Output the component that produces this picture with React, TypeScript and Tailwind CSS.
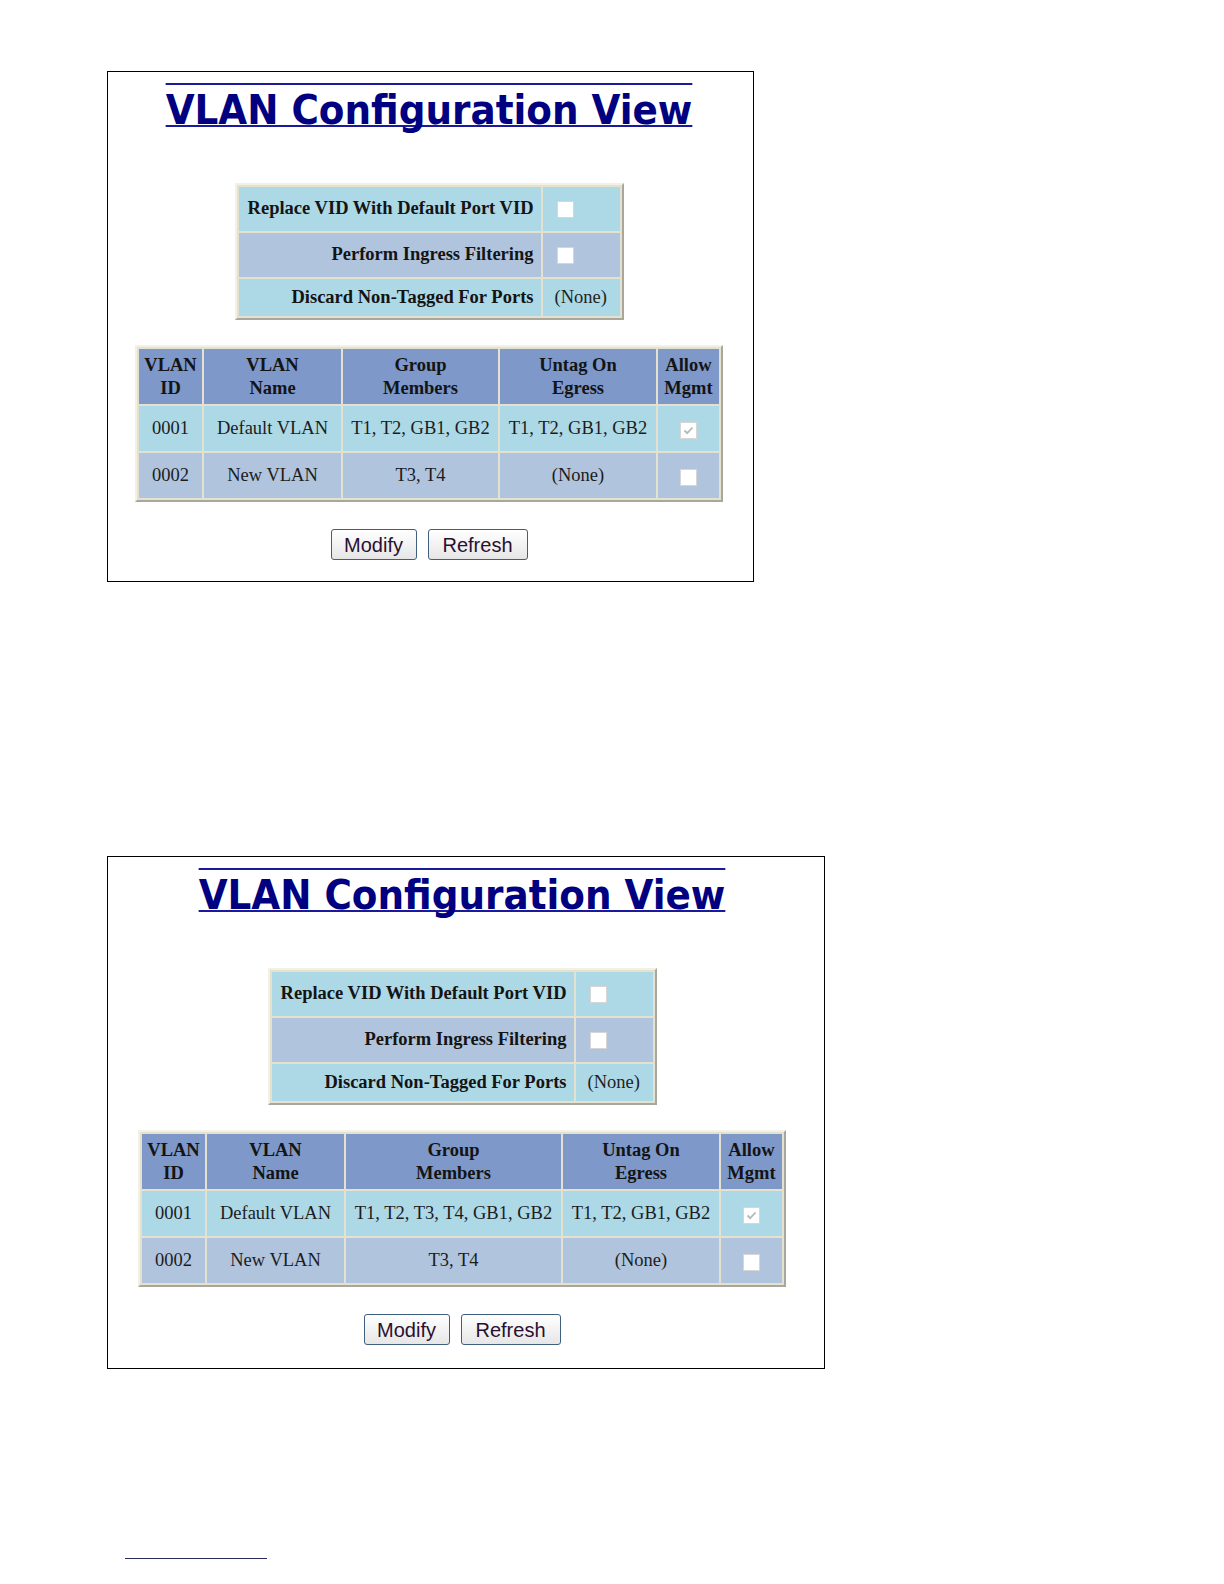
import React from "react";

const serif = "font-['Liberation_Serif','Times_New_Roman',serif]";

function Box({ checked }: { checked?: boolean }) {
  return (
    <div className="w-[17px] h-[17px] bg-white border border-[#d6d6d6] flex items-center justify-center">
      {checked ? (
        <svg width="13" height="13" viewBox="0 0 13 13">
          <path d="M2.5 6.5 L5.2 9.2 L10.5 3.5" fill="none" stroke="#b8b8b8" strokeWidth="1.8" />
        </svg>
      ) : null}
    </div>
  );
}

function Title() {
  return (
    <div className="flex justify-center">
      <span className="font-['DejaVu_Sans_Condensed','DejaVu_Sans',sans-serif] [font-stretch:condensed] font-bold text-[#000080] text-[41.5px] leading-[49px] [text-decoration-line:underline_overline] [text-decoration-skip-ink:none] decoration-[2px] decoration-[#1a1a9a]">
        VLAN Configuration View
      </span>
    </div>
  );
}

function Settings() {
  const label = `${serif} font-bold text-[18.5px] text-[#141414] flex items-center justify-end pr-[7px] whitespace-nowrap`;
  const val = `${serif} text-[18.5px] text-[#222] flex items-center pl-[12px]`;
  return (
    <div className="flex justify-center">
      <div className="border-2 border-t-[#f3f1e4] border-l-[#f3f1e4] border-r-[#a9a79c] border-b-[#a9a79c] bg-[#e4e1d0] p-[2px]">
        <div className="grid grid-cols-[302px_77px] grid-rows-[44px_44px_37px] gap-[2px]">
          <div className={`${label} bg-[#add8e6]`}>Replace VID With Default Port VID</div>
          <div className={`${val} bg-[#add8e6]`}>
            <div className="ml-[2px]"><Box /></div>
          </div>
          <div className={`${label} bg-[#b0c4de]`}>Perform Ingress Filtering</div>
          <div className={`${val} bg-[#b0c4de]`}>
            <div className="ml-[2px]"><Box /></div>
          </div>
          <div className={`${label} bg-[#add8e6]`}>Discard Non-Tagged For Ports</div>
          <div className={`${val} bg-[#add8e6]`}>(None)</div>
        </div>
      </div>
    </div>
  );
}

function VlanTable({ members, cols }: { members: string; cols: string }) {
  const head = `${serif} font-bold text-[18.5px] leading-[23px] text-[#141414] bg-[#7d98c9] flex items-center justify-center text-center`;
  const c1 = `${serif} text-[18.5px] text-[#1c1c1c] bg-[#add8e6] flex items-center justify-center whitespace-nowrap`;
  const c2 = `${serif} text-[18.5px] text-[#1c1c1c] bg-[#b0c4de] flex items-center justify-center whitespace-nowrap`;
  return (
    <div className="flex justify-center">
      <div className="border-2 border-t-[#f3f1e4] border-l-[#f3f1e4] border-r-[#a9a79c] border-b-[#a9a79c] bg-[#e4e1d0] p-[2px]">
        <div className={`grid ${cols} grid-rows-[55px_45px_45px] gap-[2px]`}>
          <div className={head}>VLAN<br />ID</div>
          <div className={head}>VLAN<br />Name</div>
          <div className={head}>Group<br />Members</div>
          <div className={head}>Untag On<br />Egress</div>
          <div className={head}>Allow<br />Mgmt</div>

          <div className={c1}>0001</div>
          <div className={c1}>Default VLAN</div>
          <div className={c1}>{members}</div>
          <div className={c1}>T1, T2, GB1, GB2</div>
          <div className={c1}><div className="mt-[3px]"><Box checked /></div></div>

          <div className={c2}>0002</div>
          <div className={c2}>New VLAN</div>
          <div className={c2}>T3, T4</div>
          <div className={c2}>(None)</div>
          <div className={c2}><div className="mt-[3px]"><Box /></div></div>
        </div>
      </div>
    </div>
  );
}

function Buttons() {
  const btn =
    "h-[31px] rounded-[3px] border border-[#3f5f7f] bg-gradient-to-b from-white to-[#e6e6e6] font-['Liberation_Sans',Arial,sans-serif] text-[20px] text-[#2a1030] flex items-center justify-center";
  return (
    <div className="flex justify-center gap-[11px]">
      <div className={`${btn} w-[86px]`}>Modify</div>
      <div className={`${btn} w-[100px]`}>Refresh</div>
    </div>
  );
}

function Panel({ width, pr, members, cols, bottom }: { width: string; pr: string; members: string; cols: string; bottom: string }) {
  return (
    <div className={`${width} border border-black bg-white flex flex-col pt-[13px] ${pr} ${bottom}`}>
      <Title />
      <div className="h-[49px]" />
      <Settings />
      <div className="h-[25px]" />
      <VlanTable members={members} cols={cols} />
      <div className="h-[27px]" />
      <Buttons />
    </div>
  );
}

export default function App() {
  return (
    <div className="w-[1224px] h-[1584px] bg-white relative">
      <div className="pl-[107px] pt-[71px] flex flex-col">
        <Panel
          width="w-[647px]"
          pr="pr-[3px]"
          bottom="pb-[21px]"
          members="T1, T2, GB1, GB2"
          cols="grid-cols-[63px_137px_155px_156px_61px]"
        />
        <div className="h-[274px]" />
        <Panel
          width="w-[718px]"
          pr="pr-[8px]"
          bottom="pb-[23px]"
          members="T1, T2, T3, T4, GB1, GB2"
          cols="grid-cols-[63px_137px_215px_156px_61px]"
        />
      </div>
      <div className="absolute left-[125px] top-[1558px] w-[142px] h-[1px] bg-[#2a2a5a]" />
    </div>
  );
}
